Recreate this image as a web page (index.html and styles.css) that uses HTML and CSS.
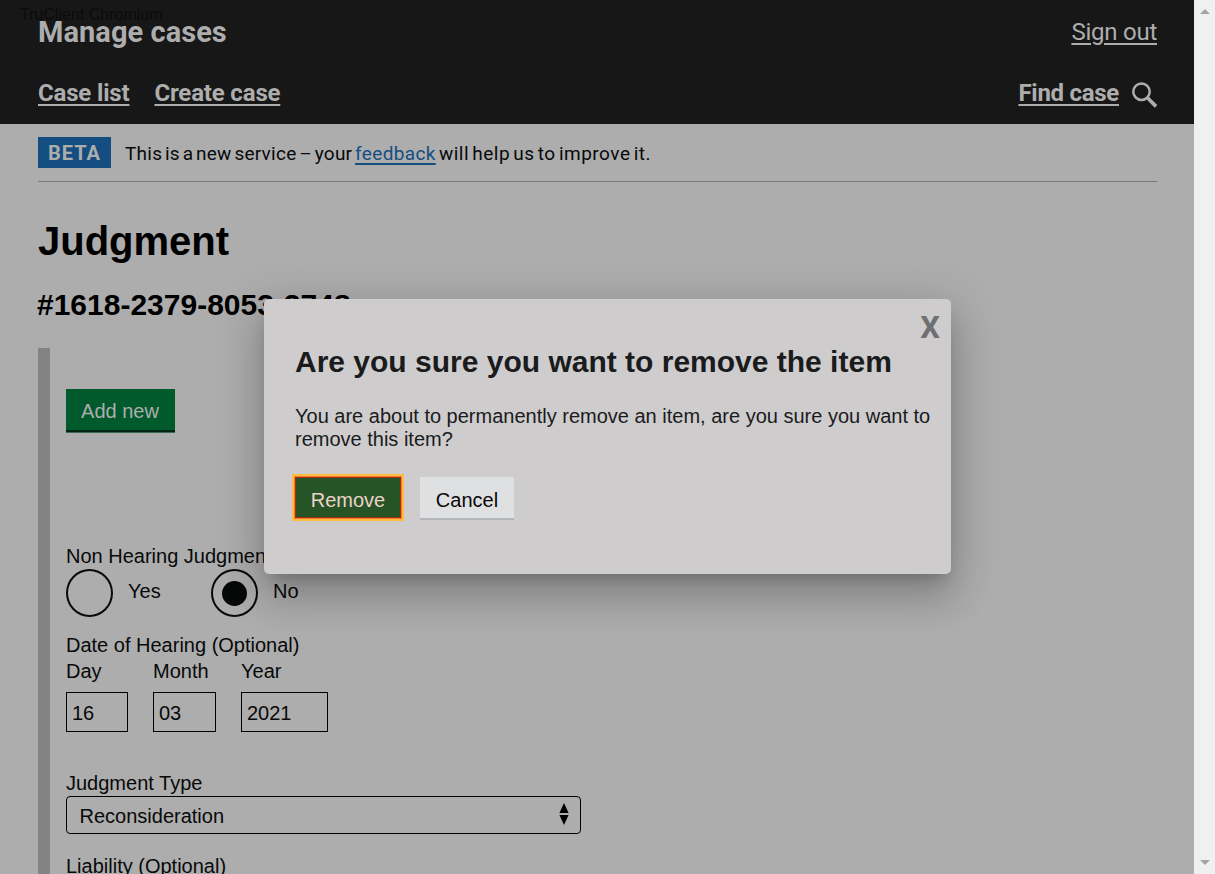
FILE: index.html
```html
<!DOCTYPE html>
<html lang="en">
<head>
<meta charset="utf-8">
<title>Judgment - Manage cases</title>
<link rel="stylesheet" href="styles.css">
</head>
<body>
<div class="viewport">
  <div class="page">
    <header class="header">
      <div class="header-row brand-row">
        <span class="brand">Manage cases</span>
        <a class="sign-out">Sign out</a>
      </div>
      <nav class="header-row nav-row">
        <a class="nav-link case-list">Case list</a>
        <a class="nav-link create-case">Create case</a>
        <a class="nav-link find-case">Find case</a>
        <svg class="search-icon" width="25" height="26" viewBox="0 0 25 26"><circle cx="9.5" cy="9.7" r="8.2" fill="none" stroke="#adadad" stroke-width="2.5"/><path d="M15.4 15.8 24 24.4" stroke="#adadad" stroke-width="3.6"/></svg>
      </nav>
      <span class="window-label">TruClient Chromium</span>
    </header>
    <div class="phase-banner">
      <strong class="phase-tag"><span>BETA</span></strong>
      <span class="phase-text">This is a new service – your <a>feedback</a><span class="phase-tail"> will help us to improve it.</span></span>
    </div>
    <main class="main">
      <h1 class="title"><span>Judgment</span></h1>
      <h2 class="case-ref"><span>#1618-2379-8053-3748</span></h2>
      <div class="collection">
        <button class="button add">Add new</button>
        <div class="label">Non Hearing Judgment</div>
        <div class="radios">
          <div class="radio"><span class="radio-ring"></span><span>Yes</span></div>
          <div class="radio"><span class="radio-ring checked"></span><span>No</span></div>
        </div>
        <div class="label">Date of Hearing (Optional)</div>
        <div class="date">
          <div class="date-item"><span>Day</span><div class="input day">16</div></div>
          <div class="date-item"><span>Month</span><div class="input month">03</div></div>
          <div class="date-item"><span>Year</span><div class="input year">2021</div></div>
        </div>
        <div class="label type-label">Judgment Type</div>
        <div class="select"><span>Reconsideration</span>
          <svg width="10" height="22" viewBox="0 0 10 22"><path d="M5 0 9.6 10H.4ZM.4 12H9.6L5 22Z" fill="#000"/></svg>
        </div>
        <div class="label liability">Liability (Optional)</div>
      </div>
    </main>
  </div>
  <div class="scrollbar">
    <svg width="10" height="5" viewBox="0 0 10 5"><path d="M5 0 10 5H0Z" fill="#a3a3a3"/></svg>
    <svg width="10" height="5" viewBox="0 0 10 5"><path d="M0 0H10L5 5Z" fill="#a3a3a3"/></svg>
  </div>
  <section class="dialog">
    <div class="close">X</div>
    <h2 class="dialog-title"><span>Are you sure you want to remove the item</span></h2>
    <p class="dialog-text"><span>You are about to permanently remove an item, are you sure you want to<br>remove this item?</span></p>
    <div class="actions">
      <button class="button remove">Remove</button>
      <button class="button cancel">Cancel</button>
    </div>
  </section>
</div>
</body>
</html>
```
FILE: styles.css
```css
* { box-sizing: border-box; }
body { margin: 0; font: 20px/24px "Liberation Sans", Arial, sans-serif; color: #080909; }
h1, h2, p { margin: 0; }
.viewport { position: relative; display: flex; width: 1215px; height: 874px; overflow: hidden; background: #adadad; }
.page { flex: 1; height: 874px; overflow: hidden; }
.scrollbar { width: 21px; background: #f0f0f0; display: flex; flex-direction: column; justify-content: space-between; align-items: center; padding: 9px 0; }
.scrollbar svg { display: block; }

.header { position: relative; height: 124px; padding: 14px 37px 0 38px; background: #171717; color: #adadad; font-family: Roboto, sans-serif; }
.header-row { display: flex; align-items: center; height: 36px; white-space: nowrap; }
.brand { font-size: 29px; font-weight: 700; letter-spacing: .05px; }
.sign-out { margin-left: auto; font-size: 24px; letter-spacing: -.25px; text-decoration: underline; text-decoration-thickness: 2px; text-underline-offset: 3px; }
.nav-row { margin-top: 25px; }
.nav-link { font-size: 24px; font-weight: 700; letter-spacing: -.17px; text-decoration: underline; text-decoration-thickness: 2px; text-underline-offset: 3px; }
.create-case { margin-left: 25px; }
.find-case { margin-left: auto; letter-spacing: -.28px; }
.search-icon { margin: 3px 0 0 13px; }
.window-label { position: absolute; left: 20px; top: 6px; font: 16px/18px "Liberation Sans", Arial, sans-serif; color: #0b0b0b; }

.phase-banner { display: flex; align-items: center; height: 58px; margin: 0 37px 0 38px; border-bottom: 1px solid #76797b; font-family: Roboto, sans-serif; }
.phase-tag { width: 73px; height: 31px; line-height: 32px; text-align: center; background: #144e81; color: #adadad; font-size: 20px; letter-spacing: 1px; }
.phase-text { margin: 2px 0 0 14px; font-size: 19px; letter-spacing: .25px; word-spacing: -2.2px; white-space: nowrap; }
.phase-text a { color: #144e81; letter-spacing: .35px; text-decoration: underline; text-decoration-thickness: 2px; text-underline-offset: 3px; }
.phase-tail { letter-spacing: .5px; word-spacing: -2px; }

.main { padding: 35px 38px 0 38px; color: #080909; }
.title { font-size: 40px; line-height: 48px; color: #000; }
.case-ref { margin-top: 22px; margin-left: -1px; font-size: 30px; line-height: 36px; color: #000; }
.collection { margin-top: 25px; height: 540px; border-left: 12px solid #828385; padding: 41px 0 0 16px; }
.button { display: block; border: 0; font: 20px/24px "Liberation Sans", Arial, sans-serif; }
.add { width: 109px; height: 44px; padding: 0 1px 1px 0; background: #005a2b; color: #adadad; box-shadow: inset 0 -1px #3b6a50, inset 0 -3px #002613; }
.add + .label { margin-top: 111px; }
.radios { display: flex; gap: 50px; height: 65px; padding-top: 1px; }
.radio { display: flex; gap: 15px; width: 95px; line-height: 44px; }
.radio-ring { display: grid; place-items: center; flex: none; width: 47px; height: 48px; border: 2px solid #080909; border-radius: 50%; }
.checked::after { content: ""; width: 25px; height: 25px; border-radius: 50%; background: #080909; }
.date { display: flex; gap: 25px; margin-top: 2px; }
.input { margin-top: 9px; height: 40px; border: 1px solid #000; padding: 0 5px; line-height: 40px; }
.day { width: 62px; }
.month { width: 63px; }
.year { width: 87px; }
.type-label { margin-top: 39px; }
.select { display: flex; justify-content: space-between; align-items: center; width: 515px; height: 38px; margin-top: 1px; padding: 1px 11px 0 12.5px; border: 1px solid #000; border-radius: 4px; }
.select svg { margin-bottom: 3px; }
.liability { margin-top: 20px; }

.dialog { position: absolute; left: 264px; top: 299px; width: 687px; height: 275px; padding: 10px 11px 0 31px; border-radius: 5px; background: #cecccd; color: #1a1b1c; box-shadow: 0 11px 15px -7px rgba(0,0,0,.2), 0 24px 38px 3px rgba(0,0,0,.14), 0 9px 46px 8px rgba(0,0,0,.12); }
.close { height: 36px; line-height: 38px; text-align: right; font-family: Roboto, sans-serif; font-size: 31px; font-weight: 700; color: #6f7071; }
.dialog-title { height: 34px; font-size: 30px; line-height: 34px; white-space: nowrap; }
.dialog-text { margin-top: 26px; line-height: 23px; white-space: nowrap; }
.actions { display: flex; gap: 19px; margin-top: 26px; }
.remove { width: 106px; height: 41px; padding: 4px 0 0; background: #275427; color: #ecd3c9; box-shadow: inset 0 0 0 1px #a82c12, 0 0 0 1px #f57c2c, 0 0 0 3px #ffbc43; }
.cancel { width: 94px; height: 43px; padding: 2px 0 0; background: #dee0e2; color: #080909; box-shadow: inset 0 -2px #b2b6ba; }
```
